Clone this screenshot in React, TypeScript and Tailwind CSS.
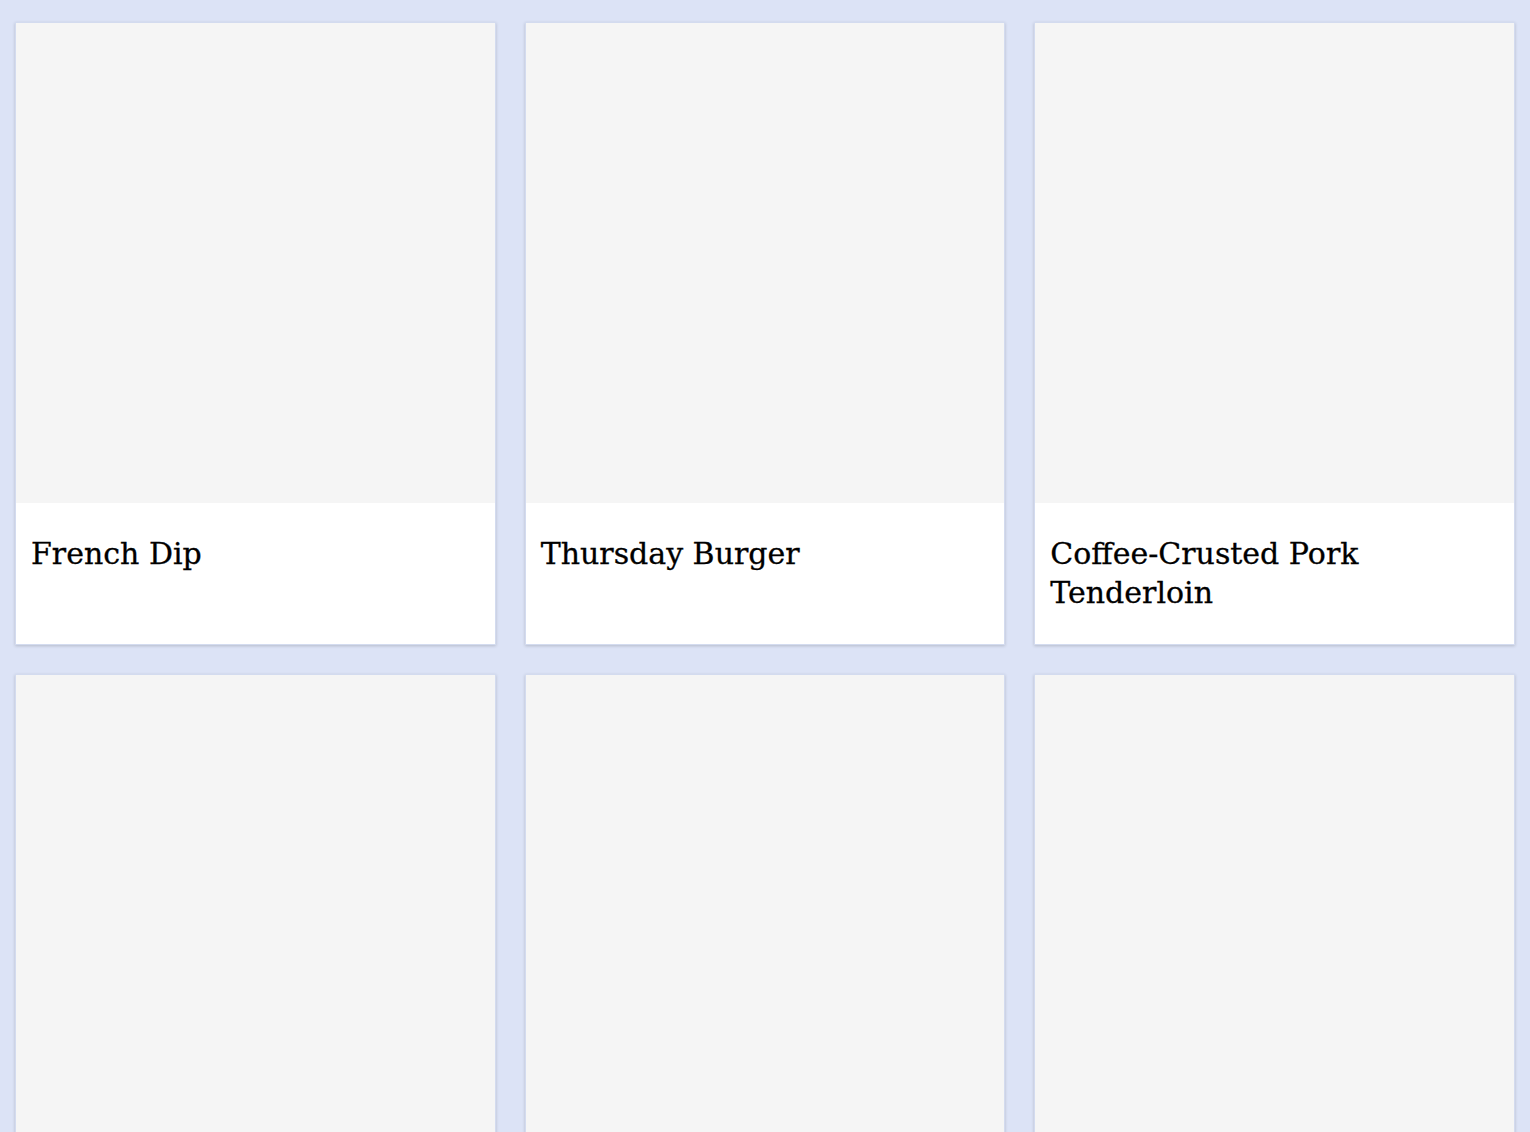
const recipes = [
  "French Dip",
  "Thursday Burger",
  "Coffee-Crusted Pork Tenderloin",
  "",
  "",
  "",
];

function RecipeCard({ title }: { title: string }) {
  return (
    <div className="flex flex-col border border-[#d3dbef] bg-white shadow-[0_1px_3px_rgba(0,0,0,0.18)]">
      <div className="h-[480px] bg-[#f5f5f5]" />
      <div className="h-[141px] px-[15px] pt-[31px]">
        <h2 className="text-[30px] leading-[39px] text-black [font-family:'DejaVu_Serif',serif] [-webkit-text-stroke:0.3px_black]">
          {title}
        </h2>
      </div>
    </div>
  );
}

export default function App() {
  return (
    <div className="min-h-screen bg-[#dce3f6] px-[15px] pt-[22px] pb-[30px]">
      <div className="grid grid-cols-3 gap-[29px]">
        {recipes.map((r, i) => (
          <RecipeCard key={i} title={r} />
        ))}
      </div>
    </div>
  );
}
